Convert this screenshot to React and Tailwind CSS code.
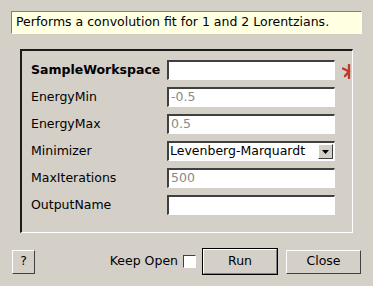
import React from "react";

function Field({ value, muted }) {
  return (
    <div className="h-[20px] border-t-2 border-l-2 border-b border-r border-t-[#404040] border-l-[#404040] border-b-white border-r-white bg-white flex items-center pl-[2px]">
      <span className={muted ? "text-[#8a8a8a]" : "text-black"}>{value}</span>
    </div>
  );
}

function Combo({ value }) {
  return (
    <div className="h-[20px] border-t-2 border-l-2 border-b border-r border-t-[#404040] border-l-[#404040] border-b-white border-r-white bg-white flex items-center pl-[1px] pr-[1px]">
      <span className="flex-1 text-black">{value}</span>
      <div className="w-[15px] h-[15px] bg-[#d4d0c8] border border-t-white border-l-white border-b-[#404040] border-r-[#404040] flex items-center justify-center">
        <svg width="7" height="4" viewBox="0 0 7 4">
          <path d="M0 0h7L3.5 4z" fill="#000" />
        </svg>
      </div>
    </div>
  );
}

function Star() {
  return (
    <svg width="9" height="15" viewBox="0 0 9 15" className="ml-[7px] mt-[3px]">
      <g stroke="#c0392b" strokeWidth="2.4" strokeLinecap="round">
        <path d="M7 1 L7 14" />
        <path d="M7 7.5 L1 4.5" />
        <path d="M7 7.5 L3 12" />
      </g>
    </svg>
  );
}

export default function App() {
  const rows = [
    { label: "SampleWorkspace", bold: true, value: "", star: true },
    { label: "EnergyMin", value: "-0.5", muted: true },
    { label: "EnergyMax", value: "0.5", muted: true },
    { label: "Minimizer", value: "Levenberg-Marquardt", combo: true },
    { label: "MaxIterations", value: "500", muted: true },
    { label: "OutputName", value: "" },
  ];

  return (
    <div
      className="w-[373px] h-[286px] bg-[#d4d0c8] text-[12.5px] text-black pt-[11px] overflow-hidden"
      style={{ fontFamily: "'DejaVu Sans', sans-serif" }}
    >
      <div className="mx-[11px] h-[23px] bg-[#ffffe1] border border-t-[#808080] border-l-[#808080] border-b-white border-r-white flex items-center pl-[4px]">
        Performs a convolution fit for 1 and 2 Lorentzians.
      </div>

      <div className="mx-[20px] mt-[15px] h-[184px] border-t-2 border-l-2 border-r border-b border-t-[#1a1a1a] border-l-[#1a1a1a] border-r-white border-b-white pl-[9px] pt-[9px]">
        <div className="flex flex-col gap-[7px]">
          {rows.map((r) => (
            <div key={r.label} className="flex items-center h-[20px]">
              <div className={"w-[136px] " + (r.bold ? "font-bold" : "")}>
                {r.label}
              </div>
              <div className="w-[168px]">
                {r.combo ? (
                  <Combo value={r.value} />
                ) : (
                  <Field value={r.value} muted={r.muted} />
                )}
              </div>
              {r.star && <Star />}
            </div>
          ))}
        </div>
      </div>

      <div className="flex items-center mt-[15px] px-[12px]">
        <button className="w-[23px] h-[24px] bg-[#d4d0c8] border border-t-white border-l-white border-b-[#404040] border-r-[#404040]">
          ?
        </button>
        <div className="flex-1" />
        <span>Keep Open</span>
        <div className="ml-[5px] w-[13px] h-[13px] bg-white border border-t-[#404040] border-l-[#404040] border-b-white border-r-white" />
        <button className="ml-[6px] w-[76px] h-[27px] bg-[#d4d0c8] border border-black">
          <div className="w-full h-full border border-t-white border-l-white border-b-[#808080] border-r-[#808080] flex items-center justify-center">
            Run
          </div>
        </button>
        <button className="ml-[8px] w-[75px] h-[24px] bg-[#d4d0c8] border border-t-white border-l-white border-b-[#404040] border-r-[#404040]">
          Close
        </button>
      </div>
    </div>
  );
}
